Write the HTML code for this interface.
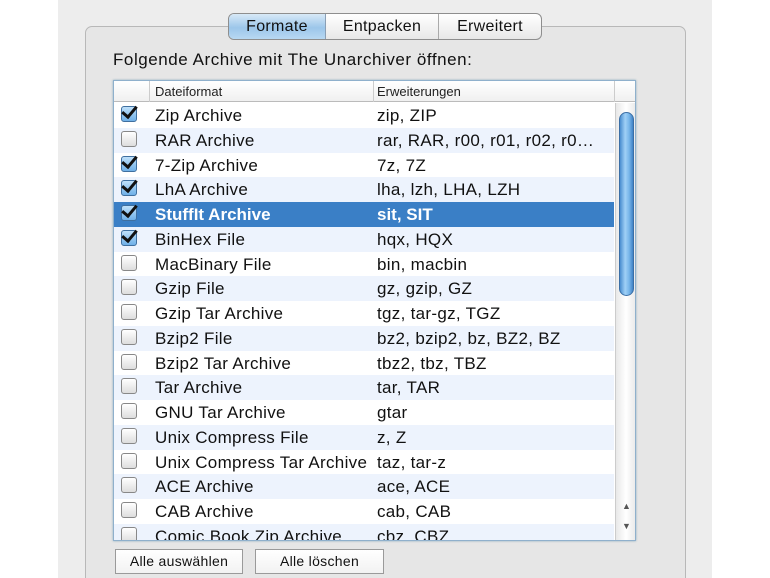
<!DOCTYPE html>
<html><head><meta charset="utf-8"><style>
*{margin:0;padding:0;box-sizing:border-box}
html,body{width:770px;height:578px;overflow:hidden}
body{background:#fff;position:relative;font-family:"Liberation Sans","DejaVu Sans",sans-serif;color:#111}
.win{position:absolute;left:58px;top:0;width:654px;height:578px;background:#ededed}
.box{position:absolute;left:85px;top:26px;width:601px;height:560px;background:#e6e6e6;border:1px solid #b8b8b8;border-radius:7px}
.tabs{position:absolute;left:228px;top:13px;height:27px;width:314px;border:1px solid #8e8e8e;border-radius:6px;background:linear-gradient(#fff,#e8e8e8);display:flex;font-size:16px;overflow:hidden;letter-spacing:0.3px}
.tabs div{line-height:25px;text-align:center}
.t1{width:97px;background:linear-gradient(#d8e9f7,#9cc6ea 55%,#b8d8f2);border-right:1px solid #8a9fb5}
.t2{width:113px;border-right:1px solid #aaa}
.t3{flex:1}
.lbl{position:absolute;left:113px;top:50px;font-size:17px;letter-spacing:0.55px}
.tbl{position:absolute;left:113px;top:80px;width:523px;height:461px;border:1px solid #8fb0cc;background:#fff;overflow:hidden;box-shadow:0 0 2px #8ab}
.hdr{position:absolute;left:0;top:0;width:523px;height:21px;border-bottom:1px solid #bbb;background:linear-gradient(#fff,#f0f0f0);font-size:13px;color:#222}
.hdr span{position:absolute;top:3px}
.vl{position:absolute;top:0;height:21px;border-left:1px solid #ccc}
.row{position:absolute;left:0;width:500px;height:24.75px;font-size:17px;letter-spacing:0.3px}
.row.a{background:#edf3fd}
.row.s{background:#3a7fc6;color:#fff;font-weight:bold;letter-spacing:0}
.row .n{position:absolute;left:41px;top:3px;white-space:nowrap}
.row .e{position:absolute;left:263px;top:3px;white-space:nowrap}
.cb{position:absolute;left:7px;top:3px;width:16px;height:16px;border:1px solid #888;border-radius:3px;background:linear-gradient(#fff,#ddd)}
.cb.c{background:linear-gradient(#bfe0fa,#6fb0e8);border-color:#3f6f9f}
.cb.c::after{content:"";position:absolute;left:3px;top:-4px;width:6px;height:12px;border:solid #111;border-width:0 3px 3px 0;transform:rotate(40deg)}
.sb{position:absolute;left:501px;top:22px;width:21px;height:439px;background:linear-gradient(90deg,#e8e8e8,#fff 50%,#e8e8e8);border-left:1px solid #ccc}
.th{position:absolute;left:3px;top:9px;width:15px;height:184px;border-radius:8px;background:linear-gradient(90deg,#4a8ed0,#9fd0f6 40%,#78b6ea 70%,#3f82c6);border:1px solid #3b6fa6}
.ar{position:absolute;left:6px;font-size:9px;color:#555}
.btn{position:absolute;top:549px;height:25px;border:1px solid #9a9a9a;background:linear-gradient(#fff,#f2f2f2);font-size:14px;text-align:center;line-height:23px;letter-spacing:0.3px}
</style></head><body>
<div class="win"></div>
<div class="box"></div>
<div class="tabs"><div class="t1">Formate</div><div class="t2">Entpacken</div><div class="t3">Erweitert</div></div>
<div class="lbl">Folgende Archive mit The Unarchiver öffnen:</div>
<div class="tbl">
<div class="hdr"><span style="left:41px">Dateiformat</span><span style="left:263px">Erweiterungen</span><div class="vl" style="left:35px"></div><div class="vl" style="left:259px"></div><div class="vl" style="left:500px"></div></div>
<div class="row" style="top:22px"><div class="cb c"></div><span class="n">Zip Archive</span><span class="e">zip, ZIP</span></div>
<div class="row a" style="top:46.75px"><div class="cb"></div><span class="n">RAR Archive</span><span class="e">rar, RAR, r00, r01, r02, r0…</span></div>
<div class="row" style="top:71.5px"><div class="cb c"></div><span class="n">7-Zip Archive</span><span class="e">7z, 7Z</span></div>
<div class="row a" style="top:96.25px"><div class="cb c"></div><span class="n">LhA Archive</span><span class="e">lha, lzh, LHA, LZH</span></div>
<div class="row s" style="top:121px"><div class="cb c"></div><span class="n">StuffIt Archive</span><span class="e">sit, SIT</span></div>
<div class="row a" style="top:145.75px"><div class="cb c"></div><span class="n">BinHex File</span><span class="e">hqx, HQX</span></div>
<div class="row" style="top:170.5px"><div class="cb"></div><span class="n">MacBinary File</span><span class="e">bin, macbin</span></div>
<div class="row a" style="top:195.25px"><div class="cb"></div><span class="n">Gzip File</span><span class="e">gz, gzip, GZ</span></div>
<div class="row" style="top:220px"><div class="cb"></div><span class="n">Gzip Tar Archive</span><span class="e">tgz, tar-gz, TGZ</span></div>
<div class="row a" style="top:244.75px"><div class="cb"></div><span class="n">Bzip2 File</span><span class="e">bz2, bzip2, bz, BZ2, BZ</span></div>
<div class="row" style="top:269.5px"><div class="cb"></div><span class="n">Bzip2 Tar Archive</span><span class="e">tbz2, tbz, TBZ</span></div>
<div class="row a" style="top:294.25px"><div class="cb"></div><span class="n">Tar Archive</span><span class="e">tar, TAR</span></div>
<div class="row" style="top:319px"><div class="cb"></div><span class="n">GNU Tar Archive</span><span class="e">gtar</span></div>
<div class="row a" style="top:343.75px"><div class="cb"></div><span class="n">Unix Compress File</span><span class="e">z, Z</span></div>
<div class="row" style="top:368.5px"><div class="cb"></div><span class="n">Unix Compress Tar Archive</span><span class="e">taz, tar-z</span></div>
<div class="row a" style="top:393.25px"><div class="cb"></div><span class="n">ACE Archive</span><span class="e">ace, ACE</span></div>
<div class="row" style="top:418px"><div class="cb"></div><span class="n">CAB Archive</span><span class="e">cab, CAB</span></div>
<div class="row a" style="top:442.75px"><div class="cb"></div><span class="n">Comic Book Zip Archive</span><span class="e">cbz, CBZ</span></div>
<div class="sb"><div class="th"></div><div class="ar" style="top:398px">▲</div><div class="ar" style="top:418px">▼</div></div>
</div>
<div class="btn" style="left:115px;width:128px">Alle auswählen</div>
<div class="btn" style="left:255px;width:129px">Alle löschen</div>
</body></html>
